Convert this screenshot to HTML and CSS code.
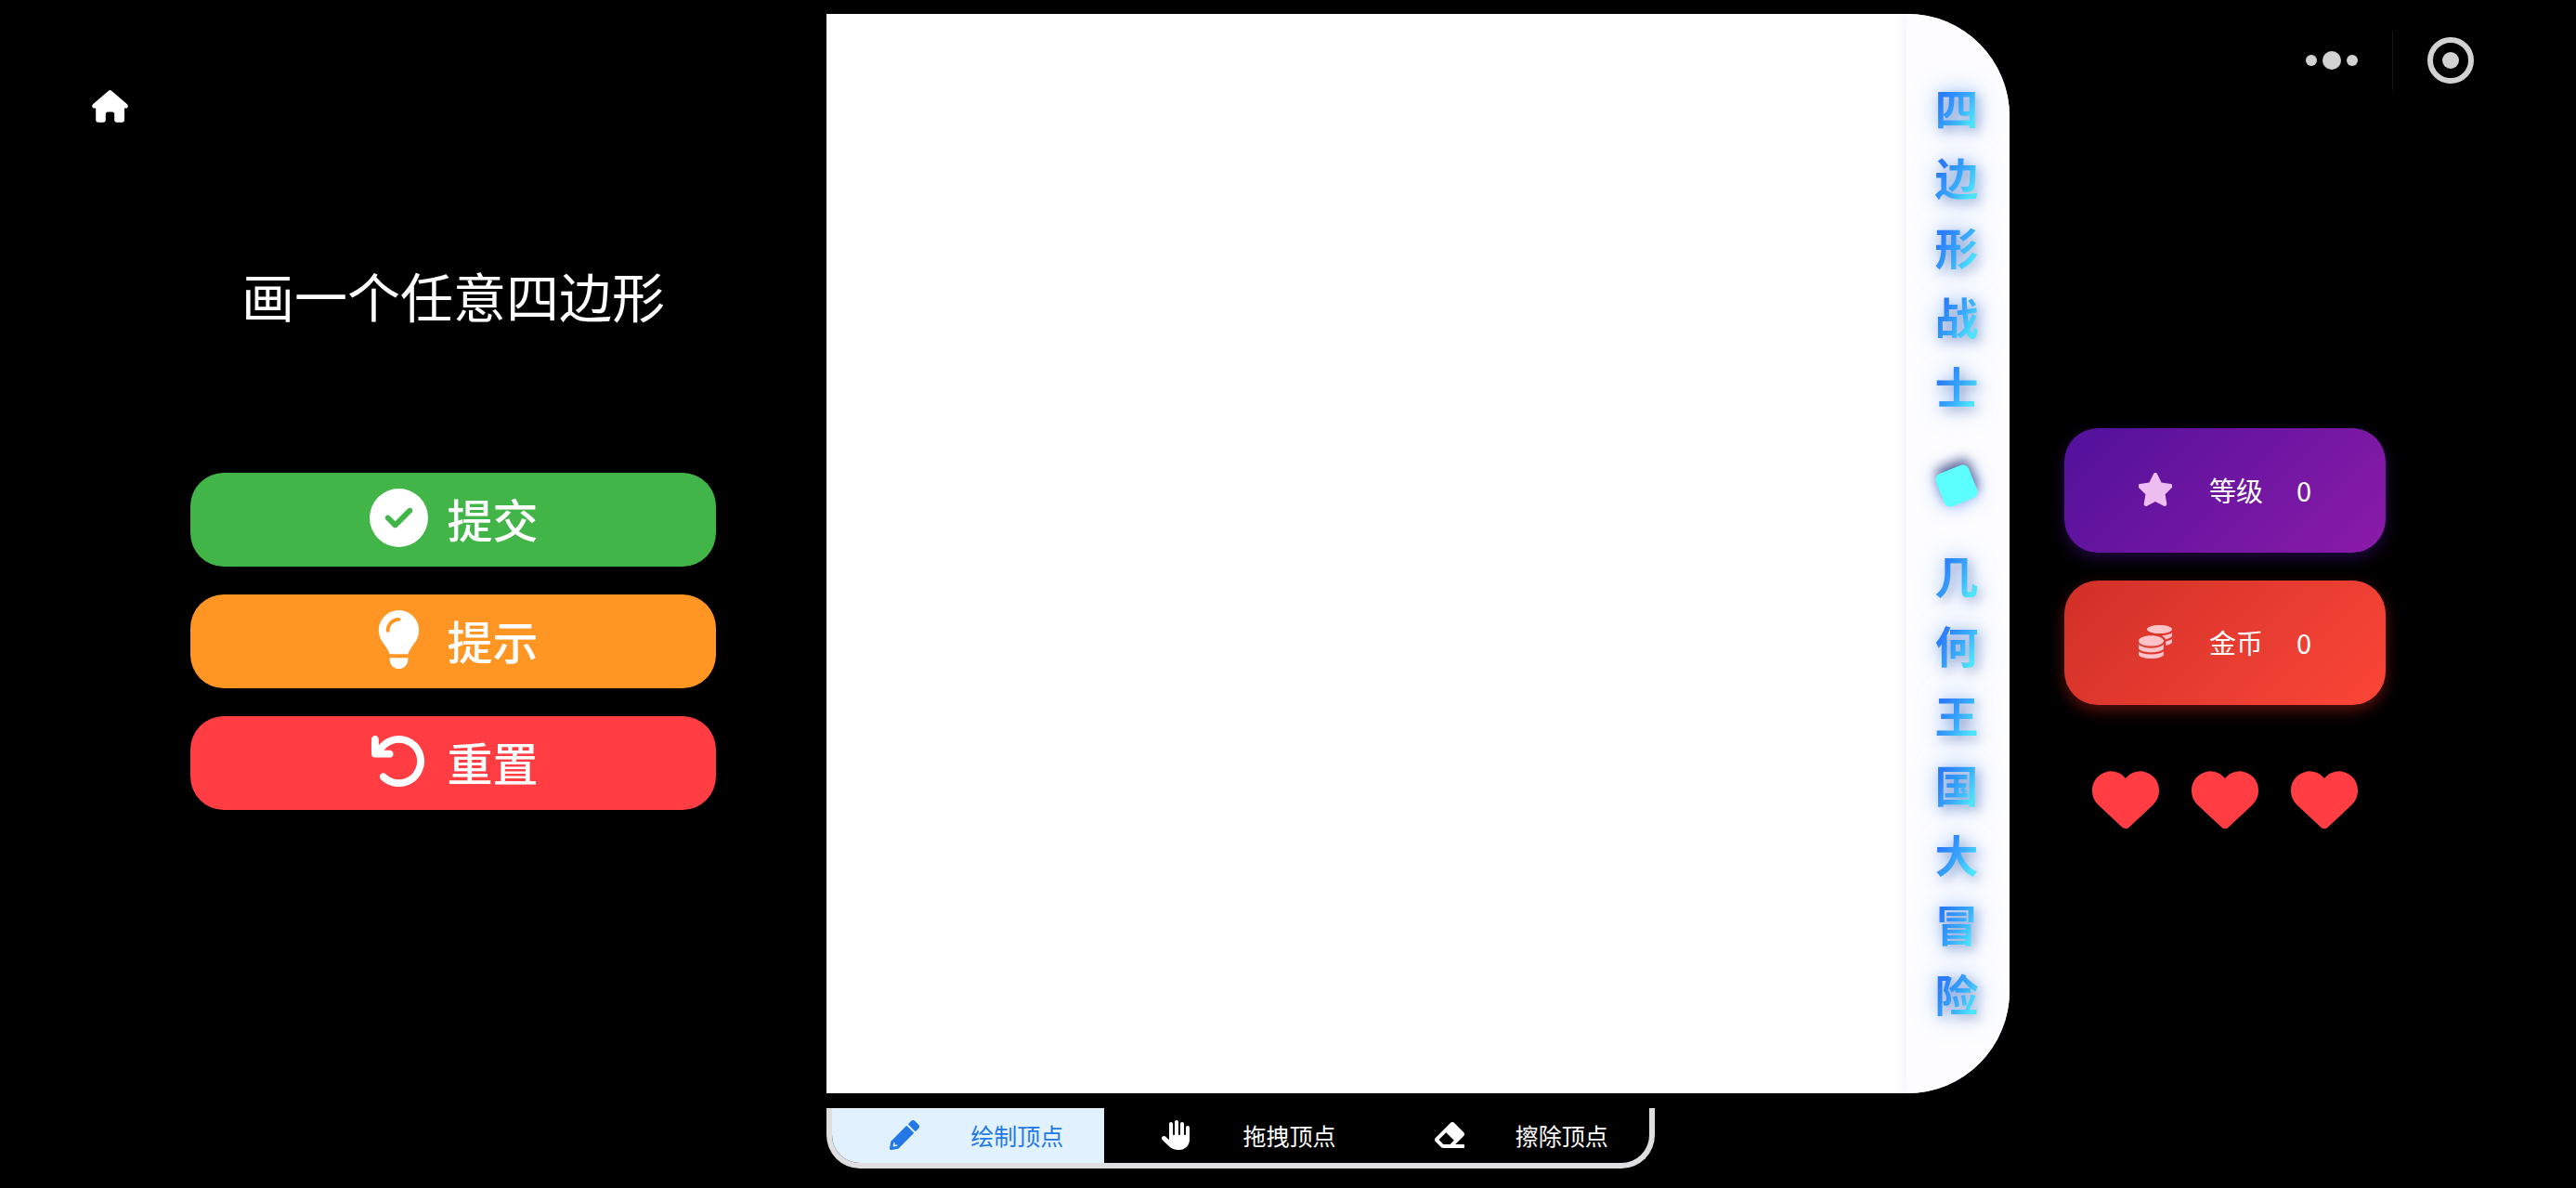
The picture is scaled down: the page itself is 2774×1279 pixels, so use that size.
FILE: index.html
```html
<!DOCTYPE html>
<html lang="zh-CN">
<head>
<meta charset="utf-8">
<meta name="viewport" content="width=device-width, initial-scale=1">
<title>四边形战士</title>
<link rel="stylesheet" href="styles.css">
</head>
<body>
<div class="game">
  <section class="task">
    <button class="icon-button home" type="button" aria-label="首页">
      <svg viewBox="0 0 39 35" width="39" height="35"><path fill="currentColor" d="M17.6.9Q19.500-.8 21.400.9L38 15.300Q39.500 17 38.300 18.700 37.200 19.800 35 19.500V32Q35 34.800 32.200 34.800H27Q24.200 34.800 24.200 32V26Q24.200 23.500 21.700 23.500H17.300Q14.800 23.500 14.800 26V32Q14.800 34.800 12 34.800H7Q4.200 34.800 4.200 32V19.500Q1.800 19.800.7 18.700-.5 17 1 15.300Z"/></svg>
    </button>
    <h2 class="task-text">画一个任意四边形</h2>
    <div class="actions">
      <button class="action submit" type="button">
        <svg viewBox="0 0 512 512"><path d="M256 512A256 256 0 1 0 256 0a256 256 0 1 0 0 512zM369 209L241 337c-9.400 9.400-24.600 9.400-33.900 0l-64-64c-9.400-9.400-9.400-24.600 0-33.900s24.600-9.400 33.900 0l47 47L335 175c9.400-9.400 24.600-9.400 33.900 0s9.400 24.600 0 33.900z"/></svg>
        <span>提交</span>
      </button>
      <button class="action hint" type="button">
        <svg viewBox="-64 0 512 512"><path d="M272 384c9.600-31.900 29.500-59.100 49.200-86.200c5.200-7.100 10.400-14.200 15.400-21.400c19.800-28.500 31.400-63 31.400-100.300C368 78.800 289.200 0 192 0S16 78.800 16 176c0 37.300 11.600 71.900 31.400 100.300c5 7.200 10.200 14.300 15.400 21.400c19.800 27.100 39.700 54.400 49.200 86.200H272zM192 512c44.200 0 80-35.800 80-80V416H112v16c0 44.200 35.800 80 80 80zM112 176c0 8.800-7.200 16-16 16s-16-7.200-16-16c0-61.900 50.100-112 112-112c8.800 0 16 7.200 16 16s-7.200 16-16 16c-44.200 0-80 35.800-80 80z"/></svg>
        <span>提示</span>
      </button>
      <button class="action reset" type="button">
        <svg viewBox="0 0 512 512"><path d="M125.700 160H176c17.700 0 32 14.300 32 32s-14.300 32-32 32H48c-17.700 0-32-14.300-32-32V64c0-17.700 14.300-32 32-32s32 14.300 32 32v51.200L97.600 97.600c87.500-87.500 229.300-87.500 316.800 0s87.500 229.300 0 316.800s-229.300 87.500-316.800 0c-12.500-12.500-12.500-32.800 0-45.300s32.800-12.500 45.300 0c62.500 62.500 163.800 62.500 226.300 0s62.500-163.800 0-226.300s-163.800-62.500-226.300 0L125.700 160z"/></svg>
        <span>重置</span>
      </button>
    </div>
  </section>

  <main class="board">
    <div class="paper">
      <div class="drawing-area"></div>
      <h1 class="banner">
        <span class="letter">四</span><span class="letter">边</span><span class="letter">形</span><span class="letter">战</span><span class="letter">士</span>
        <span class="gem"></span>
        <span class="letter">几</span><span class="letter">何</span><span class="letter">王</span><span class="letter">国</span><span class="letter">大</span><span class="letter">冒</span><span class="letter">险</span>
      </h1>
    </div>
    <div class="tools">
      <button class="tool active" type="button" aria-pressed="true">
        <svg viewBox="0 0 512 512"><path d="M498 142l-46 46c-5 5-12 5-17 0L324 77c-5-5-5-12 0-17l46-46c19-19 49-19 68 0l60 60c19 19 19 49 0 68zM284 100L22 362 0 484c-3 16 11 31 28 28l122-22 262-262c5-5 5-12 0-17L301 100c-5-5-12-5-17 0zM88 424v-44l-16 4-16 60 14 12 62-12 4-20z" fill-rule="evenodd"/></svg>
        <span>绘制顶点</span>
      </button>
      <button class="tool" type="button" aria-pressed="false">
        <svg viewBox="0 0 512 512"><path d="M288 32c0-17.700-14.300-32-32-32s-32 14.300-32 32V240c0 8.800-7.200 16-16 16s-16-7.200-16-16V64c0-17.700-14.300-32-32-32s-32 14.300-32 32V336c0 1.500 0 3.100.1 4.600L67.600 283c-16-15.200-41.300-14.600-56.600 1.400s-14.600 41.300 1.400 56.600L124.800 448c43.100 41.100 100.400 64 160 64H304c97.200 0 176-78.800 176-176V128c0-17.700-14.300-32-32-32s-32 14.300-32 32V240c0 8.800-7.200 16-16 16s-16-7.200-16-16V64c0-17.700-14.300-32-32-32s-32 14.300-32 32V240c0 8.800-7.200 16-16 16s-16-7.200-16-16V32z"/></svg>
        <span>拖拽顶点</span>
      </button>
      <button class="tool" type="button" aria-pressed="false">
        <svg viewBox="0 0 512 512"><path d="M497.941 273.941c18.745-18.745 18.745-49.137 0-67.882l-160-160c-18.745-18.745-49.136-18.746-67.883 0l-256 256c-18.745 18.745-18.745 49.137 0 67.882l96 96A48.004 48.004 0 0 0 144 480h356c6.627 0 12-5.373 12-12v-40c0-6.627-5.373-12-12-12H355.883l142.058-142.059zm-302.627-62.627l137.373 137.373L265.373 416H150.628l-80-80 124.686-124.686z"/></svg>
        <span>擦除顶点</span>
      </button>
    </div>
  </main>

  <aside class="status">
    <div class="capsule">
      <button class="icon-button" type="button" aria-label="更多">
        <svg viewBox="0 0 56 20" width="56" height="20" fill="currentColor"><circle cx="6" cy="10" r="6"/><circle cx="28" cy="10" r="10"/><circle cx="50" cy="10" r="6"/></svg>
      </button>
      <span class="divider"></span>
      <button class="icon-button" type="button" aria-label="关闭">
        <svg viewBox="0 0 50 50" width="50" height="50"><circle cx="25" cy="25" r="22" fill="none" stroke="currentColor" stroke-width="6"/><circle cx="25" cy="25" r="9" fill="currentColor"/></svg>
      </button>
    </div>
    <div class="scores">
      <div class="score level">
        <svg viewBox="32 0 512 512"><path d="M316.900 18C311.600 7 300.400 0 288.100 0s-23.400 7-28.800 18L195 150.300 51.400 171.500c-12 1.800-22 10.200-25.700 21.700s-.7 24.200 7.900 32.700L137.800 329 113.200 474.700c-2 12 3 24.200 12.900 31.300s23 8 33.800 2.300l128.300-68.500 128.300 68.500c10.800 5.700 23.900 4.900 33.800-2.300s14.900-19.300 12.900-31.300L438.500 329 542.700 225.900c8.600-8.500 11.700-21.200 7.900-32.700s-13.700-19.900-25.700-21.700L381.200 150.300 316.900 18z"/></svg>
        <span class="score-name">等级</span>
        <span>0</span>
      </div>
      <div class="score coins">
        <svg viewBox="0 0 512 512"><path d="M0 405.300V448c0 35.300 86 64 192 64s192-28.700 192-64v-42.700C342.700 434.400 267.200 448 192 448S41.300 434.400 0 405.300zM320 128c106 0 192-28.700 192-64S426 0 320 0 128 28.700 128 64s86 64 192 64zM0 300.400V352c0 35.300 86 64 192 64s192-28.700 192-64v-51.600c-41.300 34-116.900 51.600-192 51.600S41.300 334.400 0 300.400zm416 11c57.300-11.100 96-31.700 96-55.400v-42.700c-23.200 16.400-57.300 27.600-96 34.500v63.600zM192 160C86 160 0 195.800 0 240s86 80 192 80 192-35.800 192-80-86-80-192-80zm219.300 56.300c60-10.800 100.700-32 100.700-56.300v-42.700c-35.500 25.100-96.500 38.600-160.700 41.800 29.500 14.300 51.200 33.500 60 57.200z"/></svg>
        <span class="score-name">金币</span>
        <span>0</span>
      </div>
    </div>
    <div class="lives" role="img" aria-label="3">
      <svg viewBox="0 40 512 440"><path id="heart" d="M47.600 300.400L228.300 469.100c7.500 7 17.400 10.900 27.700 10.900s20.200-3.900 27.700-10.900L464.400 300.400c30.400-28.300 47.600-68 47.600-109.500v-5.800c0-69.900-50.500-129.500-119.400-141C347 36.500 300.600 51.400 268 84L256 96 244 84c-32.600-32.600-79-47.500-124.600-39.900C50.500 55.600 0 115.200 0 185.100v5.800c0 41.500 17.200 81.200 47.600 109.500z"/></svg>
      <svg viewBox="0 40 512 440"><use href="#heart"/></svg>
      <svg viewBox="0 40 512 440"><use href="#heart"/></svg>
    </div>
  </aside>
</div>
</body>
</html>
```

FILE: styles.css
```css
* {
  box-sizing: border-box;
}

body {
  margin: 0;
  background: #000;
  color: #fff;
  font-family: "Noto Sans CJK SC", "Noto Sans", sans-serif;
}

button {
  margin: 0;
  padding: 0;
  border: 0;
  background: none;
  color: inherit;
  font: inherit;
  cursor: pointer;
}

svg {
  display: block;
  flex: none;
}

.game {
  display: grid;
  grid-template-columns: minmax(0, 890fr) minmax(0, 1274fr) minmax(0, 610fr);
  min-height: 100vh;
}

.icon-button {
  display: block;
}

/* Left column: task and actions */
.task {
  padding: 97px 119px 0 99px;
}

.task-text {
  margin: 145px 0 0 106px;
  font-size: 57px;
  font-weight: 400;
  line-height: 80px;
  text-align: center;
}

.actions {
  display: flex;
  flex-direction: column;
  gap: 30px;
  margin: 152px 0 0 106px;
}

.action {
  display: flex;
  align-items: center;
  justify-content: center;
  gap: 20px;
  height: 101px;
  padding: 0 0 4px 2px;
  border-radius: 36px;
  font-size: 49px;
  font-weight: 500;
  line-height: 60px;
}

.action svg {
  width: 63px;
  height: 63px;
  fill: #fff;
}

.submit {
  background: #42b549;
}

.hint {
  background: #ff9522;
}

.reset {
  background: #ff3d43;
}

/* Middle column: paper and tools */
.board {
  display: flex;
  flex-direction: column;
  gap: 16px;
  padding: 15px 0 21px;
}

.paper {
  display: flex;
  flex: 1;
  overflow: hidden;
  border-radius: 0 110px 110px 0;
  background: #fff;
}

.drawing-area {
  flex: 1;
}

.banner {
  display: flex;
  flex-direction: column;
  align-items: center;
  justify-content: center;
  width: 111px;
  margin: 0;
  padding: 0 3px 10px 0;
  background: #fdfdff;
  box-shadow: -2px 0 12px rgba(0, 0, 0, 0.06);
  font-size: 47px;
  font-weight: 700;
  line-height: 75px;
}

.letter {
  background: linear-gradient(120deg, #2b7cfb 25%, #38a9fc 55%, #4ce4fb 80%);
  -webkit-background-clip: text;
  background-clip: text;
  color: transparent;
  filter: drop-shadow(4px 4px 6px rgba(0, 0, 60, 0.25)) drop-shadow(0 0 12px rgba(40, 130, 255, 0.5));
}

.gem {
  width: 38px;
  height: 38px;
  margin: 52px 0 39px;
  border-radius: 7px;
  background: #5cfffd;
  box-shadow: 3px -6px 12px rgba(0, 0, 60, 0.5), 0 0 20px rgba(40, 120, 255, 0.5);
  transform: rotate(-22deg);
}

.tools {
  display: flex;
  width: 70%;
  height: 65px;
  overflow: hidden;
  border: 6px solid #dfdfe1;
  border-top: 0;
  border-radius: 0 0 36px 36px;
}

.tool {
  display: flex;
  flex: 1;
  align-items: center;
  justify-content: center;
  gap: 55px;
  padding: 0 0 2px 18px;
  font-size: 25px;
  line-height: 36px;
}

.tool svg {
  width: 32px;
  height: 32px;
  fill: currentColor;
}

.tool.active {
  background: #e1f2fe;
  color: #2478e6;
}

/* Right column: status */
.status {
  display: flex;
  flex-direction: column;
  padding: 33px 110px 0 59px;
}

.capsule {
  display: flex;
  align-items: center;
  align-self: flex-end;
  gap: 37px;
  height: 64px;
  color: #d2d2d2;
}

.divider {
  width: 1px;
  height: 64px;
  background: #161616;
}

.scores {
  display: flex;
  flex-direction: column;
  gap: 30px;
  margin: 364px 95px 0 0;
}

.score {
  display: flex;
  align-items: center;
  justify-content: center;
  height: 134px;
  padding-bottom: 2px;
  border-radius: 36px;
  font-size: 29px;
  line-height: 40px;
}

.score svg {
  width: 36px;
  height: 36px;
}

.score-name {
  margin: 0 36px 0 40px;
}

.level {
  background: linear-gradient(135deg, #51119b, #8b1ba8);
  box-shadow: 0 6px 16px rgba(80, 20, 160, 0.4);
}

.level svg {
  fill: #edbcf0;
}

.coins {
  background: linear-gradient(135deg, #d03028, #fb4638);
  box-shadow: 0 6px 16px rgba(220, 40, 30, 0.4);
}

.coins svg {
  fill: #ffc3c8;
}

.lives {
  display: flex;
  justify-content: center;
  gap: 35px;
  margin: 71px 95px 0 0;
}

.lives svg {
  width: 72px;
  height: 62px;
  fill: #ff3d43;
}
```
